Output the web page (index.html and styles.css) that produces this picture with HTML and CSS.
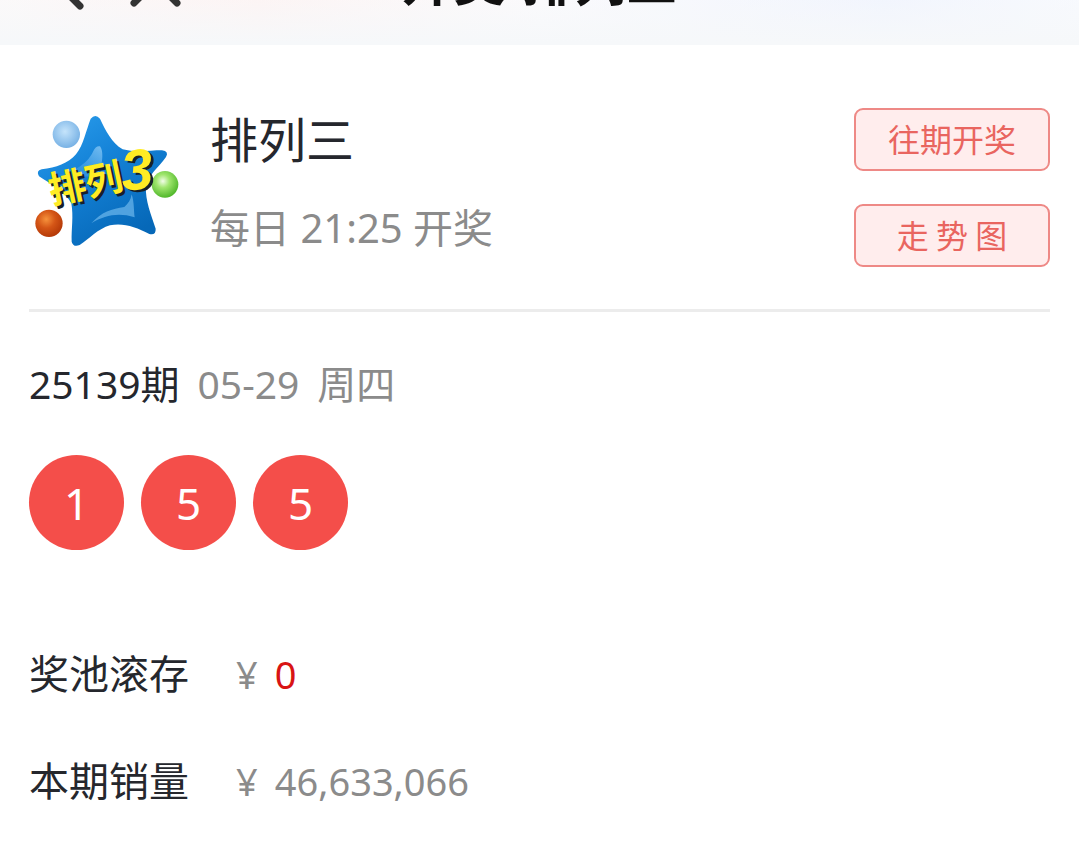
FILE: index.html
```html
<!DOCTYPE html>
<html lang="zh-CN">
<head>
<meta charset="utf-8">
<meta name="viewport" content="width=device-width, initial-scale=1">
<title>开奖-排列三</title>
<link rel="stylesheet" href="styles.css">
</head>
<body>
<header class="topbar">
  <nav class="topbar-nav">
    <button class="icon-button" type="button" aria-label="返回">
      <svg width="60" height="60" viewBox="0 0 60 60"><path d="M40 5 15 30l25 25"/></svg>
    </button>
    <button class="icon-button" type="button" aria-label="关闭">
      <svg width="60" height="60" viewBox="0 0 60 60"><path d="m9 9 43 43M52 9 9 52"/></svg>
    </button>
  </nav>
  <h1 class="topbar-title">开奖-排列三</h1>
</header>
<main class="page">
  <section class="game">
    <svg class="game-logo" viewBox="27 24 468 450" role="img" aria-label="排列3">
      <defs>
        <linearGradient id="star" x1="0" y1="0" x2="0.6" y2="1">
          <stop offset="0" stop-color="#2da0ee"/><stop offset="0.45" stop-color="#1583d8"/><stop offset="1" stop-color="#0668b8"/>
        </linearGradient>
        <linearGradient id="shine" x1="1" y1="0" x2="0" y2="1">
          <stop offset="0" stop-color="#8ccaf6" stop-opacity="0.8"/><stop offset="1" stop-color="#3b9fe8" stop-opacity="0.1"/>
        </linearGradient>
        <radialGradient id="blue" cx="0.45" cy="0.4" r="0.6"><stop offset="0" stop-color="#c5e4fb"/><stop offset="1" stop-color="#78b2e5"/></radialGradient>
        <radialGradient id="orange" cx="0.4" cy="0.35" r="0.65"><stop offset="0" stop-color="#f6923c"/><stop offset="0.5" stop-color="#d45516"/><stop offset="1" stop-color="#b53a08"/></radialGradient>
        <radialGradient id="green" cx="0.42" cy="0.38" r="0.62"><stop offset="0" stop-color="#f2fde8"/><stop offset="0.4" stop-color="#a0e66e"/><stop offset="1" stop-color="#52b82c"/></radialGradient>
      </defs>
      <path fill="url(#star)" d="M212 56Q226 40 240 56C257 92 275 128 308 148C344 158 390 151 426 151Q448 154 438 171C415 203 382 228 378 260C375 300 394 345 407 386Q408 407 388 402C348 382 312 368 270 376C234 386 208 417 179 435Q160 443 155 425C154 385 161 350 154 310C135 274 89 250 57 229Q47 213 65 208C109 203 144 190 168 163C191 134 198 91 212 56Z"/>
      <path fill="url(#shine)" d="M240 139C253 155 247 205 230 229C193 231 151 229 126 245L119 223C168 216 207 183 219 155Q228 136 240 139Z"/>
      <path fill="#6eb8ec" fill-opacity="0.7" d="M335 283C343 308 341 331 344 352C296 337 255 345 214 370C244 336 276 326 313 321C325 311 332 300 335 283Z"/>
      <circle cx="139" cy="103" r="41" fill="url(#blue)"/>
      <circle cx="87" cy="370" r="41" fill="url(#orange)"/>
      <circle cx="435" cy="253" r="40" fill="url(#green)"/>
      <g class="logo-shadow">
        <text class="logo-name" transform="translate(103 320) rotate(-12)">排列</text>
        <text class="logo-number" transform="translate(317 279) rotate(-6)">3</text>
      </g>
      <g class="logo-face" aria-hidden="true">
        <text class="logo-name" transform="translate(95 313) rotate(-12)">排列</text>
        <text class="logo-number" transform="translate(309 273) rotate(-6)">3</text>
      </g>
    </svg>
    <div class="game-info">
      <h2 class="game-name">排列三</h2>
      <p class="game-time">每日 21:25 开奖</p>
    </div>
    <div class="game-actions">
      <button class="action" type="button">往期开奖</button>
      <button class="action" type="button">走 势 图</button>
    </div>
  </section>
  <section class="draw">
    <p class="issue"><span>25139期</span><time class="issue-date" datetime="2025-05-29"><span>05-29</span><span>周四</span></time></p>
    <ol class="balls">
      <li class="ball">1</li>
      <li class="ball">5</li>
      <li class="ball">5</li>
    </ol>
  </section>
  <dl class="stats">
    <div class="stat">
      <dt>奖池滚存</dt>
      <dd><span>¥</span><span class="pool">0</span></dd>
    </div>
    <div class="stat">
      <dt>本期销量</dt>
      <dd><span>¥</span><span>46,633,066</span></dd>
    </div>
  </dl>
</main>
</body>
</html>
```
FILE: styles.css
```css
* {
  box-sizing: border-box;
}

body,
h1,
h2,
p,
dl,
dd,
ol {
  margin: 0;
  padding: 0;
}

body {
  background: #fff;
  color: #25272d;
  font-family: "Noto Sans", "Noto Sans CJK SC", sans-serif;
  font-size: 40px;
  font-weight: 400;
  line-height: 60px;
  overflow-x: hidden;
}

button {
  font-family: inherit;
  cursor: pointer;
}

.topbar {
  display: grid;
  grid-template-columns: 1fr auto 1fr;
  align-items: center;
  height: 128px;
  margin-top: -83px;
  padding: 0 40px;
  background:
    linear-gradient(to bottom, transparent 50%, #f6f8fa 98%),
    linear-gradient(to right, #fdf9f9, #fff3f2 24%, #fcfbfd 50%, #f0f4ff 82%, #f8faff);
}

.topbar-nav {
  display: flex;
  gap: 25px;
}

.icon-button {
  display: flex;
  padding: 0;
  border: 0;
  background: none;
}

.icon-button path {
  fill: none;
  stroke: #333;
  stroke-width: 7;
  stroke-linecap: round;
  stroke-linejoin: round;
}

.topbar-title {
  color: #111;
  font-size: 52px;
  font-weight: 700;
}

.page {
  padding: 0 29px;
}

.game {
  display: flex;
  align-items: flex-start;
  padding: 63px 0 42px;
  border-bottom: 3px solid #ececec;
}

.game-logo {
  flex: none;
  width: 156px;
  height: 150px;
}

.logo-name {
  font-family: "Noto Sans CJK SC", sans-serif;
  font-size: 112px;
  font-weight: 700;
}

.logo-number {
  font-family: "Liberation Sans", sans-serif;
  font-size: 172px;
  font-style: italic;
  font-weight: 700;
}

.logo-shadow {
  fill: #17202a;
}

.logo-face {
  fill: #ffec24;
}

.game-info {
  display: flex;
  flex: 1;
  flex-direction: column;
  gap: 28px;
  margin-left: 25px;
  padding-top: 2px;
}

.game-name {
  font-size: 48px;
  font-weight: 400;
}

.game-time {
  color: #8b8b8b;
}

.game-actions {
  display: flex;
  flex-direction: column;
  gap: 33px;
}

.action {
  width: 196px;
  height: 63px;
  padding: 0 0 4px;
  border: 2px solid #ee8986;
  border-radius: 9px;
  background: #ffeded;
  color: #e9655f;
  font-family: "Noto Sans CJK SC", sans-serif;
  font-size: 32px;
  font-weight: 400;
}

.issue {
  display: flex;
  gap: 18px;
  margin-top: 42px;
  font-size: 39px;
}

.issue-date {
  display: flex;
  gap: 18px;
  color: #8b8b8b;
}

.balls {
  display: flex;
  gap: 17px;
  margin-top: 41px;
  list-style: none;
}

.ball {
  display: grid;
  place-items: center;
  width: 95px;
  height: 95px;
  border-radius: 50%;
  background: #f44e4a;
  color: #fff;
  font-size: 44px;
}

.stats {
  display: grid;
  gap: 47px;
  margin-top: 94px;
}

.stat {
  display: grid;
  grid-template-columns: 207px 1fr;
}

.stat dd {
  display: flex;
  gap: 17px;
  color: #8b8b8b;
  font-size: 38px;
}

.stat .pool {
  color: #d81414;
}
```
